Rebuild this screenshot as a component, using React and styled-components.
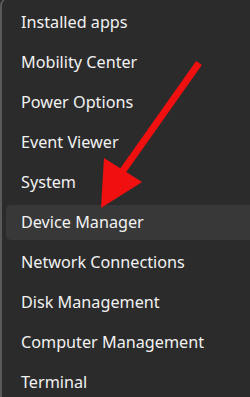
import styled, { createGlobalStyle } from "styled-components"

const GlobalStyle = createGlobalStyle`
    html, body {
        margin:0;
        padding:0;
        background:#2b2b2b;
        overflow:hidden;
    }
`

const items = [
    "Installed apps",
    "Mobility Center",
    "Power Options",
    "Event Viewer",
    "System",
    "Device Manager",
    "Network Connections",
    "Disk Management",
    "Computer Management",
    "Terminal",
]

const App = () => {
    return (
        <Screen>
            <GlobalStyle />
            <Menu>
                {items.map((item) => (
                    <MenuItem key={item} $active={item === "Device Manager"}>
                        {item}
                    </MenuItem>
                ))}
            </Menu>
            <Arrow viewBox="0 0 250 397" width="250" height="397">
                <line x1="199" y1="63" x2="122" y2="172" stroke="#f01010" strokeWidth="7" />
                <polygon points="101,208 104,158 142,182" fill="#f01010" />
            </Arrow>
        </Screen>
    )
}

export default App

const Screen = styled.div`
    position:relative;
    width:250px;
    height:397px;
    overflow:hidden;
    background:#2b2b2b;
`

const Menu = styled.div`
    display:flex;
    flex-direction:column;
    width:270px;
    height:420px;
    margin-top:-2px;
    padding-top:3px;
    box-sizing:border-box;
    border-left:2px solid #595959;
    border-top:1px solid #3a3a3a;
    border-top-left-radius:8px;
    background:#2b2b2b;
`

const MenuItem = styled.div`
    display:flex;
    align-items:center;
    height:35px;
    margin:2.5px 0 2.5px 4px;
    padding-left:15px;
    border-radius:5px;
    background:${(p) => (p.$active ? "#383838" : "transparent")};
    color:#f2f2f2;
    font-family:'Noto Sans', 'Open Sans', sans-serif;
    font-size:16.2px;
    white-space:nowrap;
`

const Arrow = styled.svg`
    position:absolute;
    top:0;
    left:0;
    pointer-events:none;
`
